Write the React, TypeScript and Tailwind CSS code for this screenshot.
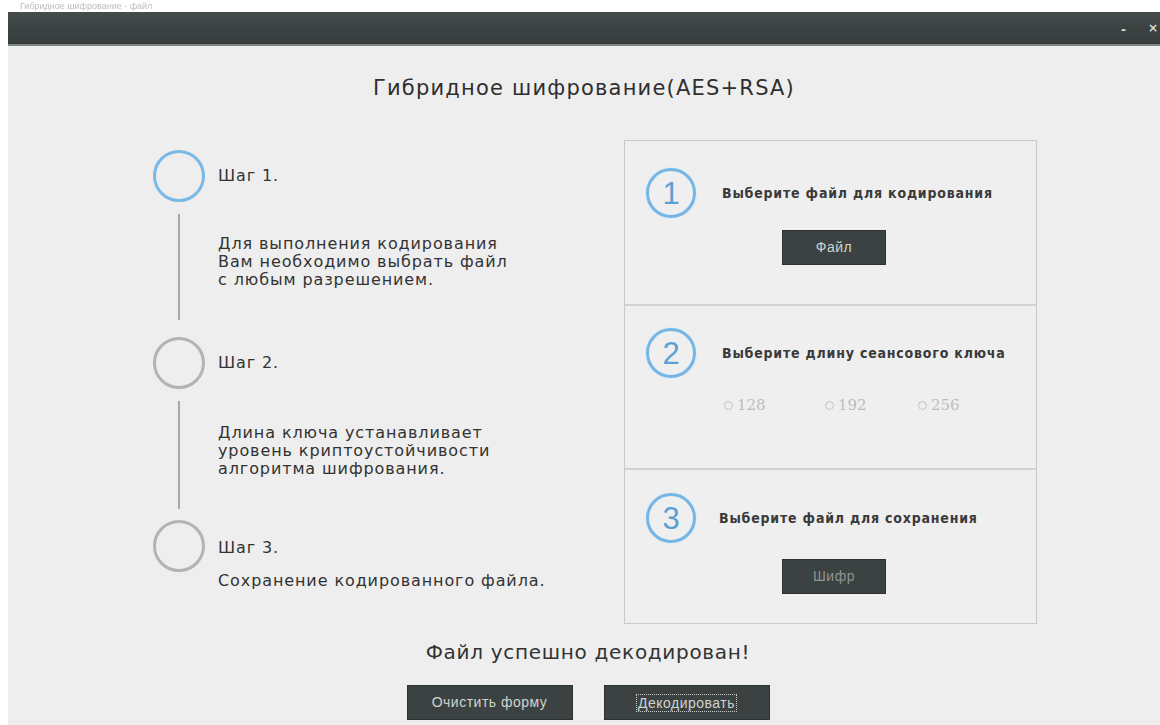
import { useState } from "react";

const steps = [
  {
    label: "Шаг 1.",
    active: true,
    text: ["Для выполнения кодирования", "Вам необходимо выбрать файл", "с любым разрешением."],
    gap: "h-[135px]",
    textTop: "pt-[33px]",
    line: "h-[106px]",
  },
  {
    label: "Шаг 2.",
    active: false,
    text: ["Длина ключа устанавливает", "уровень криптоустойчивости", "алгоритма шифрования."],
    gap: "h-[131px]",
    textTop: "pt-[35px]",
    line: "h-[108px]",
  },
];

const keySizes = ["128", "192", "256"];

function NumberBadge({ n }: { n: number }) {
  return (
    <div className="flex h-[50px] w-[50px] shrink-0 items-center justify-center rounded-full border-[3px] border-[#74b6e6] shadow-[0_0_3px_#cfe7f8]">
      <span className="font-['Liberation_Sans',sans-serif] text-[31px] font-light leading-none text-[#5c9fd3]">
        {n}
      </span>
    </div>
  );
}

function DarkButton({
  children,
  dim,
  focused,
  className = "",
}: {
  children: string;
  dim?: boolean;
  focused?: boolean;
  className?: string;
}) {
  return (
    <button
      className={`flex h-[35px] items-center justify-center border border-[#2c3231] bg-[#3b4241] font-['Liberation_Sans',sans-serif] text-[14px] tracking-[0.5px] ${
        dim ? "text-[#8e9594]" : "text-[#cfd3d2]"
      } ${className}`}
    >
      <span className={focused ? "border border-dotted border-[#c7cccb] px-[1px] leading-[16px]" : ""}>
        {children}
      </span>
    </button>
  );
}

function Heading({ children, className = "" }: { children: string; className?: string }) {
  return (
    <span
      className={`font-['DejaVu_Sans_Condensed','DejaVu_Sans',sans-serif] text-[14px] font-bold tracking-[0.8px] text-[#3a3a3a] ${className}`}
    >
      {children}
    </span>
  );
}

export default function App() {
  const [keySize, setKeySize] = useState<string | null>(null);

  return (
    <div className="flex h-[725px] w-[1160px] flex-col overflow-hidden bg-white font-['DejaVu_Sans',sans-serif] text-[#333]">
      {/* strip above the window */}
      <div className="h-[12px] pl-[20px] font-['Liberation_Sans',sans-serif] text-[9px] leading-[12px] text-[#bdbdbd] blur-[0.6px]">
        Гибридное шифрование - файл
      </div>

      <div className="ml-[8px] flex flex-1 flex-col bg-[#eeeeee]">
        {/* title bar */}
        <div className="flex h-[34px] items-center justify-end border-b-2 border-[#7d8584] bg-gradient-to-b from-[#454c4b] via-[#3c4342] to-[#363d3c] pr-[2px] text-[#d7dbda]">
          <span className="mr-[22px] mt-[4px] text-[12px] font-bold">-</span>
          <span className="text-[12px] font-bold">×</span>
        </div>

        <h1 className="mt-[30px] text-center text-[21px] leading-[24px] tracking-[1.2px] text-[#2e2e2e]">
          Гибридное шифрование(AES+RSA)
        </h1>

        <div className="mt-[40px] flex">
          {/* steps */}
          <div className="ml-[145px] w-[471px] pt-[10px] text-[16px] tracking-[0.9px]">
            {steps.map((s) => (
              <div key={s.label}>
                <div className="flex items-center">
                  <div
                    className={`h-[52px] w-[52px] rounded-full border-[3px] ${
                      s.active ? "border-[#7ab8e6]" : "border-[#b3b3b3]"
                    }`}
                  />
                  <span className="ml-[13px]">{s.label}</span>
                </div>
                <div className={`flex ${s.gap}`}>
                  <div className="flex w-[52px] justify-center pt-[12px]">
                    <div className={`${s.line} w-[2px] bg-[#a8a8a8]`} />
                  </div>
                  <div className={`ml-[13px] leading-[18px] ${s.textTop}`}>
                    {s.text.map((t) => (
                      <div key={t}>{t}</div>
                    ))}
                  </div>
                </div>
              </div>
            ))}
            <div className="flex items-center">
              <div className="h-[52px] w-[52px] rounded-full border-[3px] border-[#b3b3b3]" />
              <span className="ml-[13px] mt-[4px]">Шаг 3.</span>
            </div>
            <div className="ml-[65px] leading-[18px]">Сохранение кодированного файла.</div>
          </div>

          {/* actions */}
          <div className="w-[413px] border border-[#c9c9c9] bg-[#efefef]">
            <section className="h-[165px] border-b-2 border-[#d2d2d2] pl-[21px] pt-[27px]">
              <div className="flex items-center">
                <NumberBadge n={1} />
                <Heading className="ml-[26px]">Выберите файл для кодирования</Heading>
              </div>
              <DarkButton className="ml-[136px] mt-[12px] w-[104px]">Файл</DarkButton>
            </section>

            <section className="h-[164px] border-b-2 border-[#d2d2d2] pl-[21px] pt-[22px]">
              <div className="flex items-center">
                <NumberBadge n={2} />
                <Heading className="ml-[26px]">Выберите длину сеансового ключа</Heading>
              </div>
              <div className="ml-[78px] mt-[16px] flex font-['DejaVu_Serif',serif] text-[15px] text-[#bdbdbd]">
                {keySizes.map((k, i) => (
                  <label
                    key={k}
                    className={`flex cursor-pointer items-center ${i === 0 ? "w-[101px]" : "w-[93px]"}`}
                    onClick={() => setKeySize(k)}
                  >
                    <span className="mr-[4px] flex h-[9px] w-[9px] items-center justify-center rounded-full border border-[#c4c4c4]">
                      {keySize === k && <span className="h-[4px] w-[4px] rounded-full bg-[#9a9a9a]" />}
                    </span>
                    {k}
                  </label>
                ))}
              </div>
            </section>

            <section className="h-[153px] pl-[21px] pt-[23px]">
              <div className="flex items-center">
                <NumberBadge n={3} />
                <Heading className="ml-[23px]">Выберите файл для сохранения</Heading>
              </div>
              <DarkButton dim className="ml-[136px] mt-[16px] w-[104px]">
                Шифр
              </DarkButton>
            </section>
          </div>
        </div>

        <p className="mt-[16px] pl-[8px] text-center text-[20px] leading-[24px] tracking-[0.7px] text-[#333]">
          Файл успешно декодирован!
        </p>

        <div className="mt-[21px] flex justify-center gap-[31px] pl-[8px]">
          <DarkButton className="w-[166px]">Очистить форму</DarkButton>
          <DarkButton focused className="w-[166px]">
            Декодировать
          </DarkButton>
        </div>
      </div>
    </div>
  );
}
